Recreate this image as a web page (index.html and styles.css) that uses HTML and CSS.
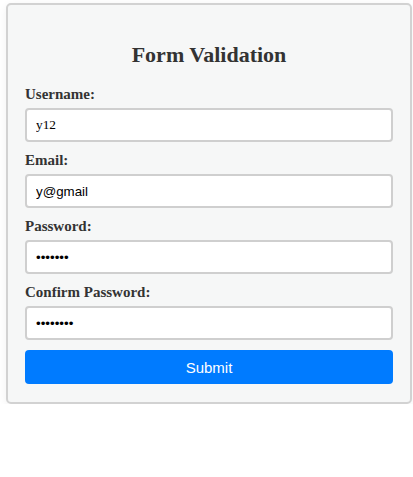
FILE: index.html
```html
<!DOCTYPE html>
<html>
<head>
<meta charset="utf-8">
<link rel="stylesheet" href="styles.css">
</head>
<body>
<div class="card">
  <h2 class="title">Form Validation</h2>
  <form class="form">
    <label class="label" for="u">Username:</label>
    <input class="field serif" id="u" type="text" value="y12">
    <label class="label" for="e">Email:</label>
    <input class="field" id="e" type="text" value="y@gmail">
    <label class="label" for="p">Password:</label>
    <input class="field" id="p" type="password" value="1234567">
    <label class="label" for="c">Confirm Password:</label>
    <input class="field" id="c" type="password" value="12345678">
    <button class="submit" type="button">Submit</button>
  </form>
</div>
</body>
</html>
```

FILE: styles.css
```css
html, body {
  background: #ffffff;
}
body {
  margin: 0;
  padding: 3px 1px 0 6px;
  font-family: "Liberation Serif", "Times New Roman", serif;
  color: #333;
}
.card {
  box-sizing: border-box;
  width: 406px;
  background: #f6f7f7;
  border: 2px solid #d2d2d2;
  border-radius: 5px;
  padding: 20px 17px 18px;
  box-shadow: 0 2px 8px rgba(0, 0, 0, 0.06);
}
.title {
  margin: 16px 0 18px;
  text-align: center;
  font-size: 22px;
  line-height: 27px;
  font-weight: bold;
  color: #333;
}
.form {
  display: flex;
  flex-direction: column;
}
.label {
  display: block;
  font-size: 15px;
  line-height: 17px;
  font-weight: bold;
  margin-bottom: 5px;
  color: #333;
}
.field {
  box-sizing: border-box;
  height: 34px;
  margin: 0 0 10px;
  padding: 0 9px;
  border: 2px solid #cfcfcf;
  border-radius: 4px;
  background: #fff;
  font-family: "Liberation Sans", Arial, sans-serif;
  font-size: 13.33px;
  color: #000;
  outline: none;
}
.field.serif {
  font-family: "Liberation Serif", "Times New Roman", serif;
}
.submit {
  height: 34px;
  border: none;
  border-radius: 4px;
  background: #007bff;
  color: #fff;
  font-family: "Liberation Sans", Arial, sans-serif;
  font-size: 15px;
  cursor: pointer;
}
```
